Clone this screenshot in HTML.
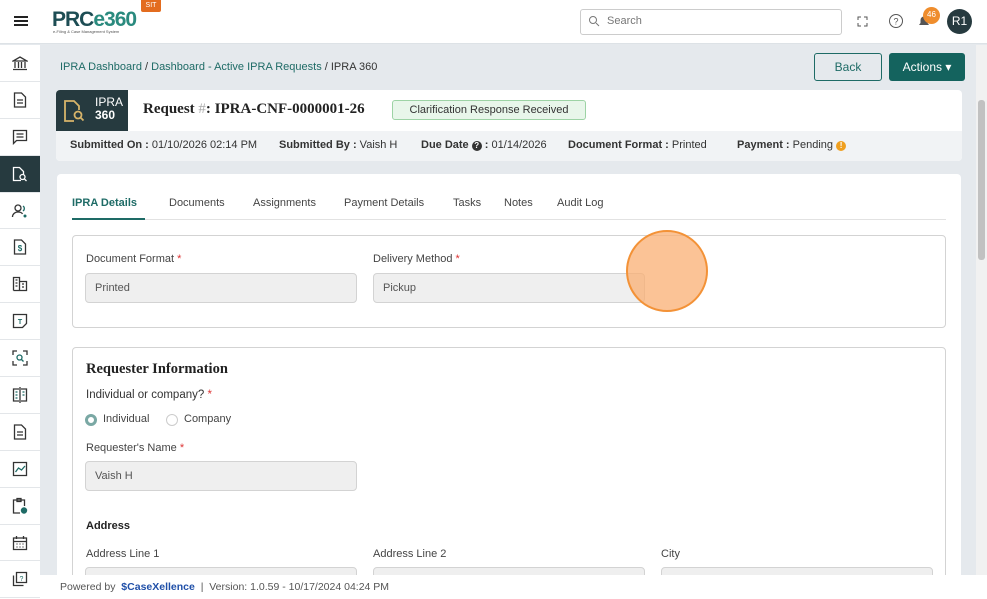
<!DOCTYPE html>
<html><head><meta charset="utf-8"><style>
*{box-sizing:border-box;margin:0;padding:0}
html,body{width:987px;height:599px;overflow:hidden}
body{font-family:"Liberation Sans",sans-serif;font-size:11.5px;color:#333;background:#e5e9ed;position:relative}
.hdr{position:absolute;left:0;top:0;width:987px;height:44px;background:#fff;border-bottom:1px solid #dde2e6}
.side{position:absolute;left:0;top:45px;width:40px;height:554px;background:#fff}
.si{height:36.9px;border-bottom:1px solid #e3e6e9;display:flex;align-items:center;justify-content:center}
.si.act{background:#263a3f}
.abs{position:absolute}
.teal{color:#1e6b66}
.card{position:absolute;background:#fff;border-radius:4px}
.lbl{position:absolute;font-size:11px;color:#444;white-space:nowrap}
.lbl i{color:#d33;font-style:normal}
.inp{position:absolute;height:30px;background:#efefef;border:1px solid #d3d3d3;border-radius:4px;font-size:11px;color:#555;padding:8px 0 0 9px}
.serif{font-family:"Liberation Serif",serif}
.tab{position:absolute;top:23px;font-size:11px;color:#444;white-space:nowrap}
.inf{position:absolute;top:8px;font-size:11px;color:#333;white-space:nowrap}
</style></head><body>
<div class="hdr">
 <div class="abs" style="left:14px;top:16px;width:14px;height:2px;background:#222;box-shadow:0 4px 0 #222,0 8px 0 #222"></div>
 <div class="abs" style="left:52px;top:8px;font-size:21px;font-weight:bold;color:#1d4d54;letter-spacing:-1px">PRC<span style="color:#2a8a7e">e360</span></div>
 <div class="abs" style="left:53px;top:29px;font-size:4px;color:#555">e-Filing &amp; Case Management System</div>
 <div class="abs" style="left:141px;top:0;width:20px;height:12px;background:#e36c1f;color:#fff;font-size:7px;text-align:center;line-height:11px;border-radius:0 0 2px 2px">SIT</div>
 <div class="abs" style="left:580px;top:9px;width:262px;height:26px;border:1px solid #ccc;border-radius:3px;color:#777;font-size:11px;padding:5px 0 0 26px">Search</div>
 <svg class="abs" style="left:588px;top:15px" width="12" height="12"><circle cx="5" cy="5" r="3.5" stroke="#777" fill="none"/><path d="M8 8l3 3" stroke="#777"/></svg>
 <svg class="abs" style="left:857px;top:16px" width="11" height="11" fill="none" stroke="#555"><path d="M1 4V1h3M7 1h3v3M10 7v3H7M4 10H1V7"/></svg>
 <svg class="abs" style="left:888px;top:13px" width="16" height="16"><circle cx="8" cy="8" r="6.5" stroke="#555" fill="none"/><text x="8" y="11.5" font-size="9" text-anchor="middle" fill="#555" font-family="Liberation Sans">?</text></svg>
 <svg class="abs" style="left:917px;top:13px" width="14" height="16"><path d="M2 12h10l-1.5-2V7a3.5 3.5 0 0 0-7 0v3z M5.5 13.5h3" fill="#555"/></svg>
 <div class="abs" style="left:923px;top:7px;width:17px;height:17px;border-radius:50%;background:#ef8d2d;color:#fff;font-size:8px;text-align:center;line-height:16px">46</div>
 <div class="abs" style="left:947px;top:9px;width:25px;height:25px;border-radius:50%;background:#263a3f;color:#fff;font-size:12px;text-align:center;line-height:25px">R1</div>
</div>
<div class="side">
 <div class="si"><svg width="16" height="16" fill="none" stroke="#333" stroke-width="1.3"><path d="M1 6h14L8 2z M3 7v6M6.5 7v6M9.5 7v6M13 7v6M1 14.5h14"/></svg></div>
 <div class="si"><svg width="14" height="16" fill="none" stroke="#333" stroke-width="1.3"><path d="M1.5 1h7l4 4v10h-11z M4 8h6M4 11h6"/></svg></div>
 <div class="si"><svg width="16" height="16" fill="none" stroke="#333" stroke-width="1.3"><path d="M1.5 1.5h13v10h-10l-3 3z M4.5 5h7M4.5 8h7"/></svg></div>
 <div class="si act"><svg width="16" height="16" fill="none" stroke="#fff" stroke-width="1.3"><path d="M9 14.5H1.5v-13h6l4 4v3"/><circle cx="10.5" cy="11" r="2.5"/><path d="M12.3 12.8L14.5 15"/></svg></div>
 <div class="si"><svg width="18" height="16" fill="none" stroke="#333" stroke-width="1.3"><circle cx="7" cy="5" r="3"/><path d="M1.5 14c0-3 2.5-5 5.5-5s4 1 4.5 2"/><path d="M12 3a3 3 0 0 1 0 5" stroke="#1e6b66"/><circle cx="14" cy="13" r="1.5" fill="#1e6b66" stroke="none"/></svg></div>
 <div class="si"><svg width="14" height="16" fill="none" stroke="#333" stroke-width="1.3"><path d="M1.5 1h7l4 4v10h-11z"/><text x="7" y="12" font-size="8" text-anchor="middle" fill="#1e6b66" stroke="none" font-family="Liberation Sans" font-weight="bold">$</text></svg></div>
 <div class="si"><svg width="16" height="16" fill="none" stroke="#333" stroke-width="1.3"><path d="M1.5 14.5V1.5h6v13M7.5 5.5h7v9h-13M3.5 4h2M3.5 7h2M3.5 10h2M10 8h2M10 11h2"/></svg></div>
 <div class="si"><svg width="16" height="16" fill="none" stroke="#333" stroke-width="1.3"><path d="M1.5 1.5h13v9l-4 4h-9z"/><text x="8" y="11" font-size="7" text-anchor="middle" fill="#1e6b66" stroke="none" font-family="Liberation Sans" font-weight="bold">T</text></svg></div>
 <div class="si"><svg width="16" height="16" fill="none" stroke="#333" stroke-width="1.3"><path d="M1 5V1h4M11 1h4v4M15 11v4h-4M5 15H1v-4"/><circle cx="7.5" cy="7.5" r="2.5" stroke="#1e6b66"/><path d="M9.5 9.5l2 2" stroke="#1e6b66"/></svg></div>
 <div class="si"><svg width="16" height="16" fill="none" stroke="#333" stroke-width="1.3"><path d="M7 2H1.5v12H7M9 2h5.5v12H9M8 0v16" /><path d="M3.5 5h2M3.5 8h2M3.5 11h2M10.5 5h2M10.5 8h2" stroke="#1e6b66"/></svg></div>
 <div class="si"><svg width="14" height="16" fill="none" stroke="#333" stroke-width="1.3"><path d="M1.5 1h7l4 4v10h-11z M4 8h6M4 11h6"/></svg></div>
 <div class="si"><svg width="16" height="16" fill="none" stroke="#333" stroke-width="1.3"><path d="M1.5 1.5h13v13h-13z"/><path d="M3.5 11l3-4 3 2 3.5-4" stroke="#1e6b66"/></svg></div>
 <div class="si"><svg width="16" height="18" fill="none" stroke="#333" stroke-width="1.3"><path d="M8 16H1.5V3h11v6M5 1.5h4v3H5z"/><circle cx="12" cy="13.5" r="3.2" fill="#1e6b66" stroke="none"/></svg></div>
 <div class="si"><svg width="16" height="16" fill="none" stroke="#333" stroke-width="1.3"><path d="M1.5 3h13v11.5h-13zM1.5 6.5h13M4.5 1v3M11.5 1v3M4.5 9h1M7.5 9h1M10.5 9h1M4.5 12h1M7.5 12h1M10.5 12h1"/></svg></div>
 <div class="si"><svg width="16" height="16" fill="none" stroke="#333" stroke-width="1.3"><path d="M4.5 1.5h10v10h-10zM1.5 4.5v10h10"/><text x="9.5" y="10" font-size="7" text-anchor="middle" fill="#1e6b66" stroke="none" font-family="Liberation Sans">?</text></svg></div>
</div>
<div class="abs teal" style="left:60px;top:61px;font-size:11px">IPRA Dashboard <span style="color:#333">/</span> Dashboard - Active IPRA Requests <span style="color:#333">/ IPRA 360</span></div>
<div class="abs" style="left:814px;top:53px;width:68px;height:28px;border:1px solid #1e6b66;border-radius:3px;color:#1e6b66;font-size:12px;text-align:center;line-height:26px">Back</div>
<div class="abs" style="left:889px;top:53px;width:76px;height:28px;background:#14635e;border-radius:3px;color:#fff;font-size:12px;text-align:center;line-height:28px">Actions ▾</div>
<div class="card" style="left:56px;top:90px;width:906px;height:71px;overflow:hidden">
 <div class="abs" style="left:0;top:0;width:72px;height:41px;background:#263a3f"></div>
 <svg class="abs" style="left:7px;top:9px" width="24" height="24" fill="none" stroke="#d7b46a" stroke-width="1.8"><path d="M11 22H2V2h9l5 5v4"/><circle cx="15" cy="16" r="3.5"/><path d="M17.5 18.5l3 3"/></svg>
 <div class="abs" style="left:39px;top:6px;color:#fff;font-size:12px;line-height:13px">IPRA<br><b>360</b></div>
 <div class="abs serif" style="left:87px;top:11px;font-size:15px;color:#222;font-weight:bold;white-space:nowrap">Request <span style="color:#aaa;font-weight:normal">#</span>: IPRA-CNF-0000001-26</div>
 <div class="abs" style="left:336px;top:10px;height:20px;width:194px;border:1px solid #9dd3a5;background:#e8f6ea;border-radius:3px;font-size:11px;line-height:18px;color:#333;text-align:center">Clarification Response Received</div>
 <div class="abs" style="left:0;top:41px;width:906px;height:30px;background:#f1f3f5">
  <div class="inf" style="left:14px"><b>Submitted On :</b> 01/10/2026 02:14 PM</div>
  <div class="inf" style="left:223px"><b>Submitted By :</b> Vaish H</div>
  <div class="inf" style="left:365px"><b>Due Date <span style="display:inline-block;width:10px;height:10px;border-radius:50%;background:#333;color:#fff;font-size:8px;text-align:center;line-height:10px">?</span> :</b> 01/14/2026</div>
  <div class="inf" style="left:512px"><b>Document Format :</b> Printed</div>
  <div class="inf" style="left:681px"><b>Payment :</b> Pending <span style="display:inline-block;width:10px;height:10px;border-radius:50%;background:#ef9f1f;color:#fff;font-size:8px;text-align:center;line-height:10px;font-weight:bold">!</span></div>
 </div>
</div>
<div class="card" style="left:57px;top:174px;width:904px;height:425px;overflow:hidden;border-radius:4px 4px 0 0">
 <div class="tab" style="left:15px;color:#1e6b66;font-weight:bold">IPRA Details</div>
 <div class="tab" style="left:112px">Documents</div>
 <div class="tab" style="left:196px">Assignments</div>
 <div class="tab" style="left:287px">Payment Details</div>
 <div class="tab" style="left:396px">Tasks</div>
 <div class="tab" style="left:447px">Notes</div>
 <div class="tab" style="left:500px">Audit Log</div>
 <div class="abs" style="left:15px;top:45px;width:874px;height:1px;background:#e2e2e2"></div>
 <div class="abs" style="left:15px;top:44px;width:73px;height:2px;background:#1e6b66"></div>
 <div class="abs" style="left:15px;top:61px;width:874px;height:93px;border:1px solid #d3d3d3;border-radius:4px"></div>
 <div class="lbl" style="left:29px;top:79px">Document Format <i>*</i></div>
 <div class="lbl" style="left:316px;top:79px">Delivery Method <i>*</i></div>
 <div class="inp" style="left:28px;top:99px;width:272px">Printed</div>
 <div class="inp" style="left:316px;top:99px;width:272px">Pickup</div>
 <div class="abs" style="left:15px;top:173px;width:874px;height:280px;border:1px solid #d3d3d3;border-radius:4px"></div>
 <div class="abs serif" style="left:29px;top:187px;font-size:14.5px;font-weight:bold;color:#222">Requester Information</div>
 <div class="lbl" style="left:29px;top:215px;font-size:11.5px;color:#333">Individual or company? <i>*</i></div>
 <div class="abs" style="left:28px;top:240px;width:12px;height:12px;border-radius:50%;background:#fff;border:3.5px solid #7aa8a4"></div>
 <div class="lbl" style="left:46px;top:239px">Individual</div>
 <div class="abs" style="left:109px;top:240px;width:12px;height:12px;border-radius:50%;border:1px solid #ccc"></div>
 <div class="lbl" style="left:127px;top:239px">Company</div>
 <div class="lbl" style="left:29px;top:268px">Requester's Name <i>*</i></div>
 <div class="inp" style="left:28px;top:287px;width:272px">Vaish H</div>
 <div class="abs" style="left:29px;top:346px;font-size:11px;font-weight:bold;color:#222">Address</div>
 <div class="lbl" style="left:29px;top:374px">Address Line 1</div>
 <div class="lbl" style="left:316px;top:374px">Address Line 2</div>
 <div class="lbl" style="left:604px;top:374px">City</div>
 <div class="inp" style="left:28px;top:393px;width:272px"></div>
 <div class="inp" style="left:316px;top:393px;width:272px"></div>
 <div class="inp" style="left:604px;top:393px;width:272px"></div>
</div>
<div class="abs" style="left:626px;top:230px;width:82px;height:82px;border-radius:50%;background:rgba(250,175,115,.75);border:2.5px solid #f39237"></div>
<div class="abs" style="left:976px;top:45px;width:11px;height:530px;background:#f1f1f1"></div>
<div class="abs" style="left:978px;top:100px;width:7px;height:160px;background:#c1c1c1;border-radius:3px"></div>
<div class="abs" style="left:40px;top:575px;width:947px;height:24px;background:#fff;font-size:10.5px;color:#555;padding:6px 0 0 20px;white-space:nowrap">Powered by &nbsp;<b style="color:#1f4fa8">$</b><span style="color:#1f4fa8;font-weight:bold">CaseXellence</span> &nbsp;| &nbsp;Version: 1.0.59 - 10/17/2024 04:24 PM</div>
</body></html>
